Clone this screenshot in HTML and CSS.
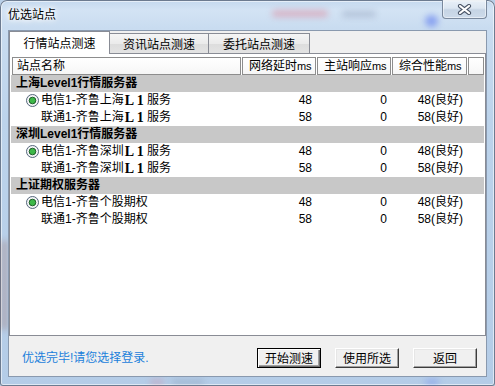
FILE: index.html
```html
<!DOCTYPE html>
<html lang="zh-CN">
<head>
<meta charset="utf-8">
<title>优选站点</title>
<link rel="stylesheet" href="styles.css">
</head>
<body>
<div class="window">
  <span class="blur b-pink"></span>
  <span class="blur b-gray"></span>
  <span class="blur b-blue"></span>
  <span class="blur b-left"></span>
  <span class="blur b-bot1"></span>
  <span class="blur b-bot2"></span>
  <span class="blur b-bot3"></span>
  <div class="titlebar">
    <span class="title">优选站点</span>
    <div class="close">
      <svg width="15" height="11" viewBox="0 0 15 11">
        <path d="M3 2 L12 9 M12 2 L3 9" stroke="#4b5668" stroke-width="4.2" stroke-linecap="round" fill="none"/>
        <path d="M3 2 L12 9 M12 2 L3 9" stroke="#ffffff" stroke-width="2.2" stroke-linecap="round" fill="none"/>
      </svg>
    </div>
  </div>
  <div class="client">
    <div class="tabs">
      <div class="tab active t1">行情站点测速</div>
      <div class="tab t2">资讯站点测速</div>
      <div class="tab t3">委托站点测速</div>
    </div>
    <div class="panel">
      <div class="list">
        <div class="hdr">
          <div class="hc c1">站点名称</div>
          <div class="hc c2">网络延时<span class="ms">ms</span></div>
          <div class="hc c3">主站响应<span class="ms">ms</span></div>
          <div class="hc c4">综合性能<span class="ms">ms</span></div>
          <div class="hc c5"></div>
        </div>

        <div class="row group">上海Level1行情服务器</div>
        <div class="row item">
          <div class="name"><svg class="radio" width="13" height="13" viewBox="0 0 13 13"><circle cx="6.5" cy="6.5" r="6" fill="#f3f4f6" stroke="#54657a"/><circle cx="6.5" cy="6.5" r="3.3" fill="#3db848" stroke="#1f5e2a" stroke-width="1"/></svg>电信1-齐鲁上海<b class="l1">L 1</b>&nbsp;服务</div>
          <div class="num">48</div><div class="num">0</div><div class="num">48(良好)</div>
        </div>
        <div class="row item plain">
          <div class="name">联通1-齐鲁上海<b class="l1">L 1</b>&nbsp;服务</div>
          <div class="num">58</div><div class="num">0</div><div class="num">58(良好)</div>
        </div>

        <div class="row group">深圳Level1行情服务器</div>
        <div class="row item">
          <div class="name"><svg class="radio" width="13" height="13" viewBox="0 0 13 13"><circle cx="6.5" cy="6.5" r="6" fill="#f3f4f6" stroke="#54657a"/><circle cx="6.5" cy="6.5" r="3.3" fill="#3db848" stroke="#1f5e2a" stroke-width="1"/></svg>电信1-齐鲁深圳<b class="l1">L 1</b>&nbsp;服务</div>
          <div class="num">48</div><div class="num">0</div><div class="num">48(良好)</div>
        </div>
        <div class="row item plain">
          <div class="name">联通1-齐鲁深圳<b class="l1">L 1</b>&nbsp;服务</div>
          <div class="num">58</div><div class="num">0</div><div class="num">58(良好)</div>
        </div>

        <div class="row group">上证期权服务器</div>
        <div class="row item">
          <div class="name"><svg class="radio" width="13" height="13" viewBox="0 0 13 13"><circle cx="6.5" cy="6.5" r="6" fill="#f3f4f6" stroke="#54657a"/><circle cx="6.5" cy="6.5" r="3.3" fill="#3db848" stroke="#1f5e2a" stroke-width="1"/></svg>电信1-齐鲁个股期权</div>
          <div class="num">48</div><div class="num">0</div><div class="num">48(良好)</div>
        </div>
        <div class="row item plain">
          <div class="name">联通1-齐鲁个股期权</div>
          <div class="num">58</div><div class="num">0</div><div class="num">58(良好)</div>
        </div>
      </div>
    </div>
    <div class="footer">
      <span class="status">优选完毕!请您选择登录.</span>
      <div class="buttons">
        <div class="btn default">开始测速</div>
        <div class="btn">使用所选</div>
        <div class="btn">返回</div>
      </div>
    </div>
  </div>
</div>
</body>
</html>
```

FILE: styles.css
```css
html, body {
  margin: 0;
  padding: 0;
}
body {
  width: 495px;
  height: 386px;
  overflow: hidden;
  background: #b8cfe8;
  font-family: "Liberation Sans", "Noto Sans CJK SC", sans-serif;
  font-size: 12px;
  color: #000;
}
.window {
  position: relative;
  width: 495px;
  height: 386px;
  box-sizing: border-box;
  padding: 0 8px 9px 8px;
  display: flex;
  flex-direction: column;
  border-radius: 7px 7px 3px 3px;
  background: linear-gradient(180deg, #c3d8ee 0px, #d3e3f4 10px, #c9dcf0 28px, #bcd3eb 120px, #b4cce7 386px);
  box-shadow: inset 0 0 0 1px #6c7b90, inset 0 0 0 2px rgba(255, 255, 255, 0.55);
  overflow: hidden;
}
.blur {
  position: absolute;
  display: block;
  filter: blur(3px);
  border-radius: 4px;
}
.b-pink { left: 272px; top: 10px; width: 56px; height: 7px; background: rgba(226, 110, 130, 0.4); }
.b-gray { left: 342px; top: 11px; width: 34px; height: 6px; background: rgba(120, 135, 165, 0.35); }
.b-blue { left: 425px; top: 15px; width: 13px; height: 12px; border-radius: 50%; background: rgba(90, 120, 240, 0.6); filter: blur(3px); }
.b-left { left: 2px; top: 240px; width: 5px; height: 90px; background: rgba(150, 70, 50, 0.35); }
.b-bot1 { left: 150px; top: 380px; width: 14px; height: 4px; background: rgba(220, 110, 130, 0.4); }
.b-bot2 { left: 172px; top: 380px; width: 32px; height: 4px; background: rgba(110, 125, 150, 0.35); }
.b-bot3 { left: 425px; top: 380px; width: 14px; height: 4px; background: rgba(90, 120, 240, 0.5); }

.titlebar {
  position: relative;
  height: 30px;
  flex: none;
  display: flex;
  align-items: flex-start;
}
.title {
  padding-top: 6px;
  line-height: 16px;
  font-family: "Noto Sans CJK SC", sans-serif;
  font-size: 12px;
  color: #000;
  text-shadow: 0 0 4px #fff, 0 0 6px #fff, 0 0 8px rgba(255,255,255,0.9);
}
.close {
  margin-left: auto;
  width: 45px;
  height: 19px;
  box-sizing: border-box;
  border: 1px solid #7a899d;
  border-top: none;
  border-radius: 0 0 4px 4px;
  background: linear-gradient(180deg, rgba(240, 245, 250, 0.85) 0%, rgba(222, 231, 241, 0.85) 45%, rgba(196, 210, 226, 0.85) 55%, rgba(205, 218, 233, 0.85) 100%);
  box-shadow: inset 0 0 0 1px rgba(255, 255, 255, 0.5);
  display: flex;
  align-items: center;
  justify-content: center;
}
.close svg { display: block; }

.client {
  flex: 1;
  display: flex;
  flex-direction: column;
  background: #f0f0f0;
  border: 1px solid #8999ae;
  position: relative;
}
.tabs {
  display: flex;
  align-items: flex-end;
  height: 22px;
  flex: none;
  position: relative;
  z-index: 2;
}
.tab {
  box-sizing: border-box;
  height: 20px;
  border: 1px solid #898c95;
  border-bottom: none;
  background: linear-gradient(180deg, #f5f5f5 0%, #ebebeb 50%, #dddddd 51%, #e3e3e3 100%);
  text-align: center;
  line-height: 19px;
  font-family: "Noto Sans CJK SC", sans-serif;
  white-space: nowrap;
  margin-left: -1px;
  position: relative;
}
.tab.active {
  height: 23px;
  margin-bottom: -1px;
  margin-left: 0;
  background: #fff;
  line-height: 22px;
  z-index: 3;
}
.t1 { width: 101px; }
.t2 { width: 100px; }
.t3 { width: 102px; }

.panel {
  flex: none;
  height: 283px;
  box-sizing: border-box;
  border: 1px solid #898c95;
  background: #fff;
  padding: 3px 1px 2px 1px;
  position: relative;
  z-index: 1;
}
.list {
  background: #fff;
  height: 100%;
}
.hdr {
  display: flex;
  gap: 1px;
  padding-left: 1px;
  height: 18px;
}
.hc {
  box-sizing: border-box;
  height: 18px;
  border: 1px solid #8d8d8d;
  background: linear-gradient(180deg, #ffffff, #f6f6f6);
  line-height: 16px;
  padding-left: 6px;
  white-space: nowrap;
  overflow: hidden;
}
.ms {
  font-size: 11px;
  letter-spacing: -0.3px;
}
.c1 { width: 229px; padding-left: 4px; }
.c2 { width: 74px; }
.c3 { width: 74px; }
.c4 { width: 75px; }
.c5 { flex: 1; }

.row {
  height: 17px;
  line-height: 17px;
  white-space: nowrap;
}
.group {
  background: #c8c8c8;
  font-weight: bold;
  padding-left: 5px;
}
.item {
  display: grid;
  grid-template-columns: 230px 75px 75px 76px 1fr;
}
.name {
  display: flex;
  align-items: center;
  padding-left: 15px;
}
.item.plain .name {
  padding-left: 30px;
}
.radio {
  display: block;
  flex: none;
  margin-right: 2px;
}
.l1 {
  font-family: "Liberation Serif", serif;
  font-weight: bold;
  font-size: 14px;
  margin-left: 1px;
}
.num {
  text-align: right;
  padding-right: 4px;
}

.footer {
  flex: 1;
  display: flex;
  align-items: flex-start;
  padding-top: 12px;
}
.status {
  padding-left: 13px;
  margin-top: 1px;
  line-height: 18px;
  color: #1b80db;
}
.buttons {
  margin-left: auto;
  margin-right: 9px;
  display: flex;
  gap: 14px;
}
.btn {
  width: 64px;
  height: 20px;
  box-sizing: border-box;
  background: #f0f0f0;
  border: 1px solid;
  border-color: #ffffff #3c3c3c #3c3c3c #ffffff;
  box-shadow: inset -1px -1px 0 #a0a0a0, inset 1px 1px 0 #e6e6e6;
  text-align: center;
  line-height: 17px;
  font-family: "Noto Sans CJK SC", sans-serif;
}
.btn.default {
  border-color: #000;
  box-shadow: inset 1px 1px 0 #ffffff, inset -1px -1px 0 #6e6e6e, inset -2px -2px 0 #a0a0a0;
}
```
